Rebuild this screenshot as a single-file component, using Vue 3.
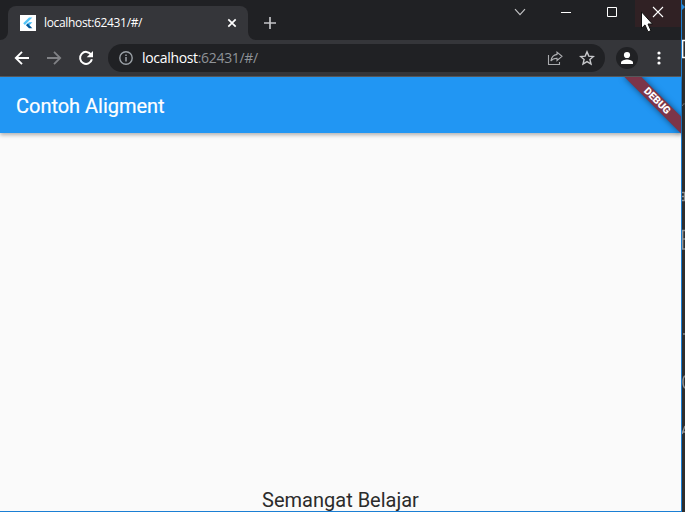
<script setup>
const title = 'Contoh Aligment'
const message = 'Semangat Belajar'
</script>

<template>
  <div class="desktop">
    <div class="window">
      <div class="tabstrip">
        <svg class="flare" width="8" height="8" viewBox="0 0 8 8"><path d="M8 0a8 8 0 0 1-8 8h8z" fill="#35363a" /></svg>
        <div class="tab">
          <svg class="favicon" width="16" height="16" viewBox="0 0 16 16">
            <rect width="16" height="16" fill="#fff" />
            <path d="M3.2 8.3 9 2.4h3.4L4.9 10z" fill="#54c5f8" />
            <path d="M6 10.2 9 7.2h3.4l-3 3z" fill="#40b8f5" />
            <path d="M6 10.2 7.7 8.5l4.7 4.7H9z" fill="#01579b" />
          </svg>
          <span class="tab-title">localhost:62431/#/</span>
          <svg class="tab-close" width="10" height="10" viewBox="0 0 10 10">
            <path d="M1.3 1.3 8.7 8.7M8.7 1.3 1.3 8.7" stroke="#fff" stroke-width="1.7" />
          </svg>
        </div>
        <svg class="flare" width="8" height="8" viewBox="0 0 8 8"><path d="M0 0a8 8 0 0 0 8 8H0z" fill="#35363a" /></svg>
        <svg class="plus" width="12" height="12" viewBox="0 0 12 12">
          <path d="M6 0v12M0 6h12" stroke="#c3c4c7" stroke-width="1.7" />
        </svg>
        <div class="controls">
          <div class="control">
            <svg width="12" height="12" viewBox="0 0 12 12"><path d="M1 3.2 6 8.6l5-5.4" fill="none" stroke="#c0c1c3" stroke-width="1.2" /></svg>
          </div>
          <div class="control">
            <svg width="12" height="12" viewBox="0 0 12 12"><path d="M1 6.5h10" stroke="#fff" /></svg>
          </div>
          <div class="control">
            <svg width="12" height="12" viewBox="0 0 12 12"><path d="M1.5 1.5h9v9h-9z" fill="none" stroke="#fff" /></svg>
          </div>
          <div class="control close">
            <svg width="12" height="12" viewBox="0 0 12 12"><path d="M1 1l10 10M11 1 1 11" stroke="#fff" stroke-width="1.1" /></svg>
          </div>
        </div>
      </div>

      <div class="toolbar">
        <svg class="back" width="16" height="16" viewBox="0 0 16 16"><path d="M15 8H2.2M8 1.8 1.8 8 8 14.2" fill="none" stroke="#fff" stroke-width="1.9" /></svg>
        <svg class="forward" width="16" height="16" viewBox="0 0 16 16"><path d="M1 8h12.8M8 1.8 14.2 8 8 14.2" fill="none" stroke="#818286" stroke-width="1.8" /></svg>
        <svg class="reload" width="16" height="16" viewBox="0 0 16 16">
          <path d="M13.1 4.6A6 6 0 1 0 13.9 9.3" fill="none" stroke="#fff" stroke-width="2" />
          <path d="M15 1v6.3H8.7z" fill="#fff" />
        </svg>
        <div class="omnibox">
          <svg class="info" width="14" height="14" viewBox="0 0 14 14">
            <circle cx="7" cy="7" r="6.2" fill="none" stroke="#9aa0a6" stroke-width="1.4" />
            <path d="M7 6v4.5M7 3.4v1.5" stroke="#9aa0a6" stroke-width="1.5" />
          </svg>
          <span class="url">localhost<span class="path">:62431/#/</span></span>
          <svg class="share" width="16" height="16" viewBox="0 0 16 16">
            <path d="M1.5 5v9.5h11V12" fill="none" stroke="#a9aaad" stroke-width="1.1" />
            <path d="M10 2.1 15 6.3l-5 4.2V8.2C7 8.2 5.2 9 3.9 11 4.4 7.5 6.3 4.9 10 4.4z" fill="none" stroke="#b0b1b4" stroke-width="1.1" />
          </svg>
          <svg class="star" width="16" height="16" viewBox="0 0 16 16">
            <path d="M8 1.9l1.8 4.2 4.6.4-3.5 3 1.1 4.5L8 11.6 4 14l1.1-4.5-3.5-3 4.6-.4z" fill="none" stroke="#c8c9cc" stroke-width="1.4" />
          </svg>
        </div>
        <svg class="avatar" width="22" height="22" viewBox="0 0 22 22">
          <circle cx="11" cy="11" r="11" fill="#202124" />
          <circle cx="11" cy="8" r="3.1" fill="#fff" />
          <path d="M5 17v-1.6c0-2 4-3 6-3s6 1 6 3V17z" fill="#fff" />
        </svg>
        <svg class="menu" width="4" height="14" viewBox="0 0 4 14">
          <circle cx="2" cy="2" r="1.6" fill="#fff" /><circle cx="2" cy="7" r="1.6" fill="#fff" /><circle cx="2" cy="12" r="1.6" fill="#fff" />
        </svg>
      </div>

      <header class="appbar">
        <h1>{{ title }}</h1>
      </header>
      <main><p>{{ message }}</p></main>
      <div class="banner-clip"><div class="banner">DEBUG</div></div>
    </div>

    <svg class="backdrop" width="3" height="512" viewBox="0 0 3 512">
      <path d="M0 4l3 3-3 3z" fill="#2789d8" />
      <path d="M3 40.5H.7v17H3" fill="none" stroke="#fff" stroke-width="1.3" />
      <path d="M0 106l2-2.5 1 1" fill="none" stroke="#777" />
      <path d="M0 192.5h2.5v8H0M0 196.5h3" fill="none" stroke="#959595" stroke-width="1.3" />
      <path d="M3 230.5H.7V249H3M1 239h2" fill="none" stroke="#959595" stroke-width="1.4" />
      <path d="M1 334h2" stroke="#777" stroke-width="2" />
      <path d="M3 376Q1 377 1 382t2 6" fill="none" stroke="#959595" stroke-width="1.4" />
      <path d="M0 434l3-8M1 432h2" fill="none" stroke="#959595" stroke-width="1.4" />
    </svg>
    <svg class="cursor" width="12" height="22" viewBox="0 0 12 22">
      <path d="M.5.8v16.5L4 13.9l3 7 3-1.3L7 13h4.500z" fill="#fff" stroke="#111" stroke-width="1" />
    </svg>
  </div>
</template>

<style>
body { margin: 0; overflow: hidden; }
</style>

<style scoped>
.desktop { position: relative; display: flex; width: 685px; height: 512px; background: #2e2e2e; overflow: hidden; }
.window { position: relative; box-sizing: border-box; display: flex; flex-direction: column; width: 682px; height: 512px; border-right: 1px solid #1b7fd4; border-bottom: 1px solid #1b7fd4; background: #fafafa; }
svg { display: block; flex: none; }
.tabstrip { display: flex; height: 40px; flex: none; background: #202124; }
.tab { display: flex; align-items: center; box-sizing: border-box; width: 240px; height: 34px; margin-top: 6px; padding: 0 11px 0 12px; border-radius: 8px 8px 0 0; background: #35363a; }
.tab-title { margin-left: 8px; flex: 1; color: #fff; font: 12px/16px "Open Sans", "Noto Sans", sans-serif; letter-spacing: -0.34px; }
.flare { align-self: flex-end; }
.plus { margin: 17px 0 0 8px; }
.controls { display: flex; margin-left: auto; }
.control { display: flex; align-items: center; justify-content: center; width: 46px; height: 24px; }
.close { height: 27px; width: 46px; box-sizing: border-box; padding: 0 0 3px; background: #302124; }
.toolbar { display: flex; align-items: center; box-sizing: border-box; height: 37px; flex: none; padding: 0 20px 1px 14px; background: #35363a; border-bottom: 1px solid #5a5b5e; }
.forward { margin-left: 16px; }
.reload { margin-left: 16px; }
.omnibox { display: flex; align-items: center; box-sizing: border-box; width: 497px; height: 28px; margin-left: 14px; padding: 0 10px 0 11px; border-radius: 14px; background: #202124; }
.url { margin-left: 9px; flex: 1; color: #fff; font: 14px/20px "Open Sans", "Noto Sans", sans-serif; letter-spacing: -0.32px; }
.path { color: #8f9398; }
.star { margin-left: 16px; }
.avatar { margin-left: 11px; }
.menu { margin-left: auto; }
.appbar { display: flex; align-items: center; box-sizing: border-box; height: 56px; flex: none; padding: 2px 0 0 16px; background: #2196f3; box-shadow: 0 2px 4px rgba(0, 0, 0, .3); }
h1 { margin: 0; color: #fff; font: 400 20px/24px Roboto, sans-serif; letter-spacing: -0.02px; -webkit-text-stroke: 0.2px #fff; }
main { display: flex; flex: 1; align-items: flex-end; justify-content: center; }
p { margin: 0; color: #2b2b2b; font: 400 20px/21px Roboto, sans-serif; }
.banner-clip { position: absolute; top: 77px; right: 0; width: 90px; height: 70px; overflow: hidden; }
.banner { position: absolute; left: 26px; top: 18px; width: 80px; height: 12px; transform: rotate(45deg); background: #7c3549; box-shadow: 0 0 6px rgba(0, 0, 0, .5); color: #fff; font: 900 10.2px/12px Roboto, sans-serif; text-align: center; }
.backdrop { display: block; }
.cursor { position: absolute; left: 641px; top: 11px; }
</style>
